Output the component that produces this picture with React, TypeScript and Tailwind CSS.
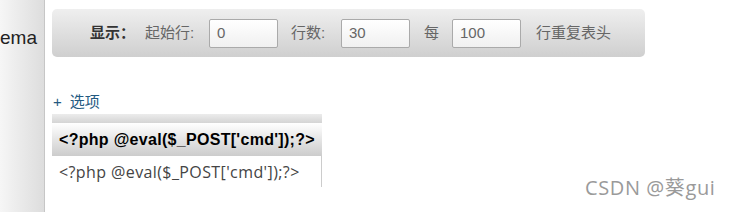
const cjk = "font-['Liberation_Sans','Noto_Sans_CJK_SC',sans-serif]";

const Field = ({ value }: { value: string }) => (
  <div className="flex h-[29px] w-[69px] shrink-0 items-center rounded-[2px] border border-[#aaaaaa] bg-gradient-to-b from-white to-[#f0f0f0] pl-[7px] text-[15px] text-[#666666]">
    {value}
  </div>
);

const App = () => {
  const code = "<?php @eval($_POST['cmd']);?>";

  return (
    <div className={`relative flex h-[212px] w-[731px] overflow-hidden bg-white ${cjk}`}>
      <aside className="h-full w-[45px] shrink-0 border-r border-[#c6c6c6] bg-gradient-to-r from-[#f6f6f6] to-[#dddddd]">
        <div className="mt-[25px] text-[19px] leading-[26px] text-[#222222]">ema</div>
      </aside>

      <main className="pl-[7px] pt-[9px]">
        <div className="flex h-[48px] w-[593px] items-center rounded-[5px] bg-gradient-to-b from-[#efefef] to-[#cfcfcf] pl-[38px] text-[15px] text-[#666666]">
          <span className="w-[55px] shrink-0 font-bold text-[#333333]">显示：</span>
          <span className="w-[64px] shrink-0">起始行:</span>
          <Field value="0" />
          <span className="w-[63px] shrink-0 pl-[13px]">行数:</span>
          <Field value="30" />
          <span className="w-[42px] shrink-0 pl-[14px]">每</span>
          <Field value="100" />
          <span className="pl-[15px]">行重复表头</span>
        </div>

        <div className="mt-[35px] flex text-[15px] leading-[20px] text-[#235a81]">
          <span className="pl-[1px]">+</span>
          <span className="ml-[8px]">选项</span>
        </div>

        <div className="mt-[2px] w-[270px]">
          <div className="h-[9px] bg-gradient-to-b from-[#ececec] to-[#d4d4d4]" />
          <div className="flex h-[33px] items-center whitespace-nowrap bg-gradient-to-b from-white to-[#cccccc] pl-[7px] text-[16px] font-bold tracking-[0.3px] text-black">
            {code}
          </div>
          <div className="flex h-[31px] items-center whitespace-nowrap border-r border-[#cccccc] pl-[7px] font-['Open_Sans',sans-serif] text-[16px] tracking-[0.4px] text-[#444444]">
            {code}
          </div>
        </div>
      </main>

      <div className="absolute left-[585px] top-[176px] font-['Open_Sans','Noto_Sans_CJK_SC',sans-serif] text-[20px] leading-[24px] tracking-[0.6px] text-[#9a9a9a]">
        CSDN @葵gui
      </div>
    </div>
  );
};

export default App;
